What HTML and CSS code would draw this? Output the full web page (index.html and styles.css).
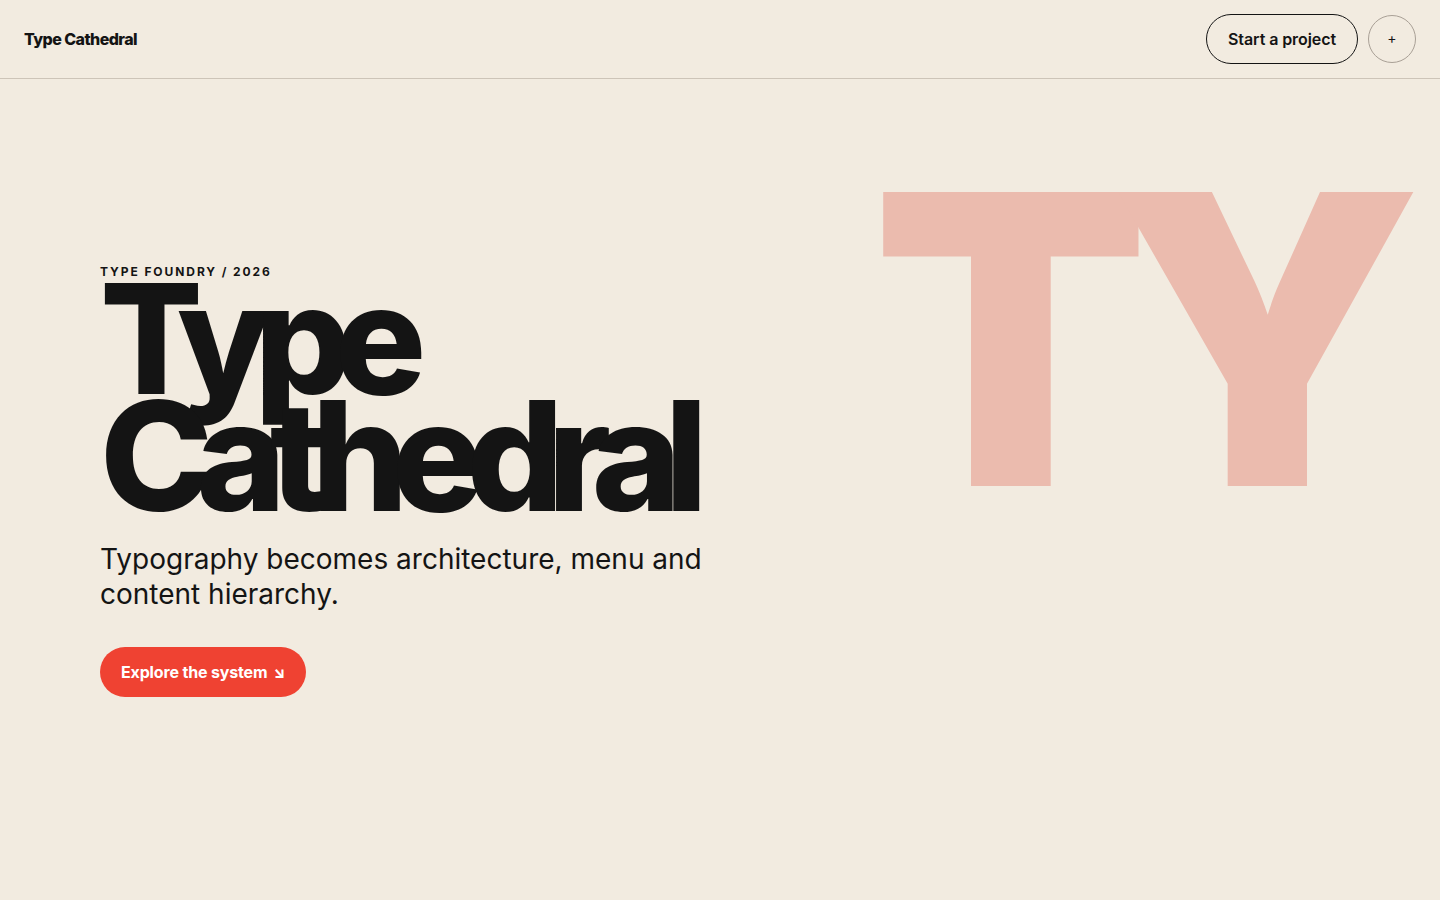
FILE: index.html
```html
<!DOCTYPE html>
<html lang="en">
<head>
<meta charset="utf-8">
<title>Type Cathedral</title>
<link rel="stylesheet" href="styles.css">
</head>
<body>
<header class="topbar">
  <a class="brand" href="#">Type Cathedral</a>
  <div class="actions">
    <a class="btn-outline" href="#">Start a project</a>
    <button class="btn-circle" aria-label="Open menu"><span>+</span></button>
  </div>
</header>
<main class="hero">
  <div class="hero-copy">
    <p class="eyebrow">TYPE FOUNDRY / 2026</p>
    <h1 class="title"><span>Type</span><span>Cathedral</span></h1>
    <p class="lead">Typography becomes architecture, menu and content hierarchy.</p>
    <a class="btn-primary" href="#">Explore the system <span class="arrow">↘</span></a>
  </div>
  <div class="hero-mark" aria-hidden="true">TY</div>
</main>
</body>
</html>
```
FILE: styles.css
```css
* { box-sizing: border-box; }
html, body { margin: 0; padding: 0; }
body {
  background: #f2ebe0;
  color: #141414;
  font-family: Inter, "Noto Sans", sans-serif;
  min-height: 100vh;
  overflow: hidden;
}
a { color: inherit; text-decoration: none; }

.topbar {
  display: flex;
  align-items: center;
  justify-content: space-between;
  height: 79px;
  padding: 0 24px;
  border-bottom: 1px solid #cdc4b8;
}
.brand {
  font-weight: 800;
  font-size: 16px;
  letter-spacing: -0.035em;
}
.actions {
  display: flex;
  align-items: center;
  gap: 10px;
}
.btn-outline {
  display: inline-flex;
  align-items: center;
  height: 50px;
  padding: 0 21px;
  border: 1px solid #141414;
  border-radius: 999px;
  font-weight: 600;
  font-size: 16px;
  letter-spacing: -0.005em;
}
.btn-circle {
  display: flex;
  align-items: center;
  justify-content: center;
  width: 48px;
  height: 48px;
  border-radius: 50%;
  border: 1px solid #a9a096;
  background: transparent;
  color: #141414;
  font-family: Inter, sans-serif;
  font-size: 14px;
  line-height: 1;
  padding: 0;
  cursor: pointer;
}
.btn-circle span { display: block; margin-top: -2px; }

.hero {
  display: grid;
  grid-template-columns: 1fr auto;
  padding: 0 58px 0 100px;
}
.hero-copy {
  padding-top: 185px;
}
.eyebrow {
  margin: 0;
  font-size: 12px;
  font-weight: 700;
  letter-spacing: 0.16em;
}
.title {
  margin: 2px 0 0 0;
  font-size: 152px;
  font-weight: 800;
  letter-spacing: -0.108em;
  line-height: 0.77;
  display: flex;
  flex-direction: column;
}
.title span { display: block; }
.lead {
  margin: 27px 0 0 0;
  max-width: 640px;
  font-size: 28px;
  line-height: 1.25;
  font-weight: 400;
  letter-spacing: 0;
}
.btn-primary {
  display: inline-flex;
  align-items: center;
  gap: 6px;
  margin-top: 35px;
  height: 50px;
  padding: 0 21px;
  border-radius: 999px;
  background: #ef4232;
  color: #fff;
  font-weight: 700;
  font-size: 16px;
  letter-spacing: -0.01em;
}
.arrow { font-size: 15px; font-weight: 800; }

.hero-mark {
  padding-top: 58px;
  font-size: 404px;
  font-weight: 900;
  line-height: 1;
  letter-spacing: -0.1em;
  color: #ebbbae;
}
```
